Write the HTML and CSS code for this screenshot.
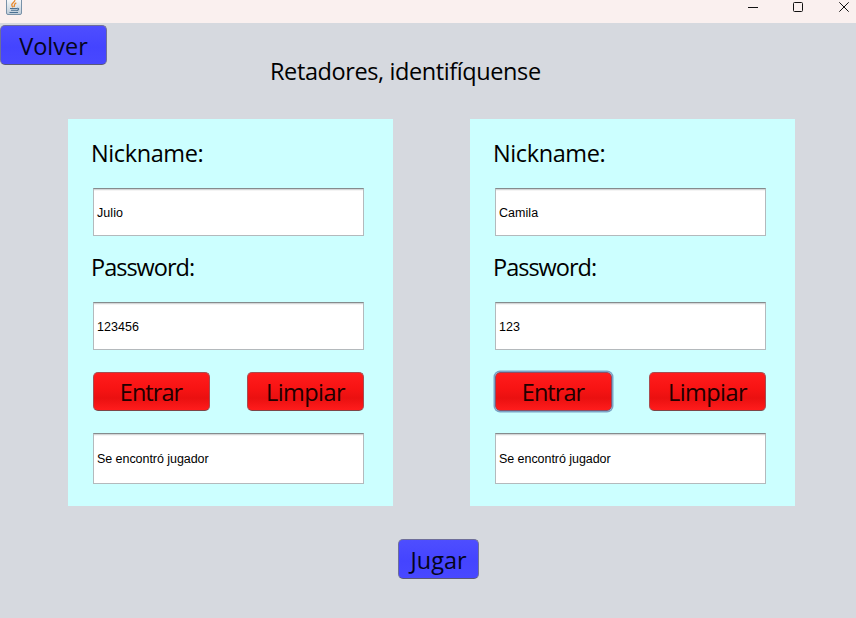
FILE: index.html
```html
<!DOCTYPE html>
<html lang="es">
<head>
<meta charset="utf-8">
<title>Retadores</title>
<link rel="stylesheet" href="styles.css">
</head>
<body>
<header class="titlebar">
  <svg class="java" width="16" height="16" viewBox="0 0 16 16">
    <defs><linearGradient id="g" x1="0" y1="0" x2="0" y2="1"><stop offset="0" stop-color="#fff"/><stop offset="1" stop-color="#bccbd8"/></linearGradient></defs>
    <rect x=".5" y="-2.5" width="15" height="17" rx="1.5" fill="url(#g)" stroke="#7891a8"/>
    <path d="M8.800 0C9.500 2.500 3 3.500 7.200 7.300M10.300 2.800C7.500 4 8.800 5.200 8.100 7" fill="none" stroke="#e88a2e" stroke-width="1.300"/>
    <path d="M4 8.500h7M5 10.200h5.500M3.500 12.500h8.500M11 8.300c2.500-.3 2 2-.4 2.300" fill="none" stroke="#4b7192" stroke-width="1.100"/>
  </svg>
  <svg class="controls" width="104" height="16" viewBox="0 0 104 16" fill="none" stroke="#111">
    <path d="M0 7.500h10"/>
    <rect x="45.500" y="2.500" width="9" height="9" rx="1"/>
    <path d="M91.300 2.300l9.400 9.400M100.700 2.300l-9.400 9.400"/>
  </svg>
</header>
<main class="content">
  <button class="btn blue volver"><span>Volver</span></button>
  <h1 class="title">Retadores, identifíquense</h1>
  <div class="panels">
    <section class="panel">
      <label class="nick">Nickname:</label>
      <div class="field">Julio</div>
      <label class="pass">Password:</label>
      <div class="field digits">123456</div>
      <div class="actions">
        <button class="btn red entrar"><span>Entrar</span></button>
        <button class="btn red limpiar"><span>Limpiar</span></button>
      </div>
      <div class="field message">Se encontró jugador</div>
    </section>
    <section class="panel">
      <label class="nick">Nickname:</label>
      <div class="field">Camila</div>
      <label class="pass">Password:</label>
      <div class="field digits">123</div>
      <div class="actions">
        <button class="btn red entrar focused"><span>Entrar</span></button>
        <button class="btn red limpiar"><span>Limpiar</span></button>
      </div>
      <div class="field message">Se encontró jugador</div>
    </section>
  </div>
  <button class="btn blue jugar"><span>Jugar</span></button>
</main>
</body>
</html>
```
FILE: styles.css
```css
* { box-sizing: border-box; }
body {
  margin: 0;
  width: 856px;
  height: 618px;
  overflow: hidden;
  background: #d6d9df;
  color: #000;
  font: 23.5px/32px "Open Sans", "Noto Sans", sans-serif;
}
.titlebar {
  height: 23px;
  display: flex;
  justify-content: space-between;
  align-items: flex-start;
  padding: 0 4px 0 6px;
  background: #faf0ef;
}
.java, .controls { display: block; }
.content {
  display: flex;
  flex-direction: column;
  align-items: flex-start;
  height: 595px;
  padding-top: 2px;
}
.btn {
  display: flex;
  align-items: center;
  justify-content: center;
  margin: 0;
  padding: 0;
  border: 1px solid #6b6b7c;
  border-radius: 5px;
  color: #000;
  font: inherit;
  flex: none;
}
.blue {
  height: 40px;
  border-color: #6e6e9a;
  border-bottom-color: #5a5a78;
  background: linear-gradient(#4e4eff, #4444ff 55%, #4848ff);
  color: #05051c;
}
.volver { width: 107px; padding-top: 2px; }
.jugar { width: 81px; margin: 33px 0 0 398px; padding-top: 2px; }
.title {
  margin: -10px 0 0 270px;
  height: 64px;
  font: inherit;
  letter-spacing: -0.4px;
  white-space: nowrap;
}
.panels { display: flex; gap: 77px; margin-left: 68px; }
.panel {
  width: 325px;
  height: 387px;
  padding: 18px 29px 0 25px;
  background: #ccffff;
}
.panel label {
  display: block;
  height: 51px;
  margin-left: -2px;
}
.panel .nick { letter-spacing: -0.4px; }
.panel .pass { margin-top: 15px; letter-spacing: -1px; }
.field {
  display: flex;
  align-items: center;
  height: 48px;
  padding: 1px 0 0 3px;
  border: 1px solid #b4b9bc;
  border-top-color: #858b8d;
  background: #fff;
  box-shadow: inset 0 1px 0 #d4d6d7, inset 0 2px 0 #f4f4f4;
  font: 12.5px/16px "Liberation Sans", Arial, sans-serif;
  letter-spacing: 0.05px;
}
.actions { display: flex; justify-content: space-between; margin: 22px 0; }
.red {
  width: 117px;
  height: 39px;
  padding-top: 1px;
  border-color: #a84c50;
  border-bottom-color: #7c4548;
  background: linear-gradient(#ff1c1c, #f81414 40%, #ea1010 68%, #ff1c1c);
  color: #200000;
}
.entrar { padding-right: 1px; letter-spacing: -0.95px; }
.limpiar { letter-spacing: -0.55px; }
.focused { border-color: #8a5068; box-shadow: 0 0 0 1.5px #7aa3c6; }
.message { height: 51px; letter-spacing: -0.05px; }
```
